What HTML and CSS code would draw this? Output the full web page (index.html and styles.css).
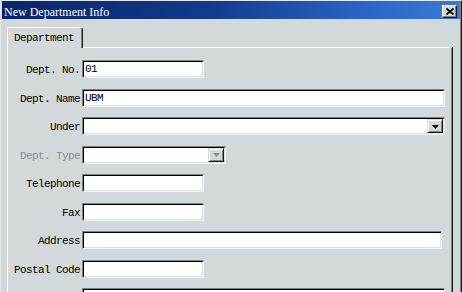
FILE: index.html
```html
<!DOCTYPE html>
<html>
<head>
<meta charset="utf-8">
<title>New Department Info</title>
<link rel="stylesheet" href="styles.css">
</head>
<body>
<div class="window">
  <div class="titlebar">
    <span class="title">New Department Info</span>
    <span class="close"><svg width="8" height="7" viewBox="0 0 8 7"><path d="M0.5 0.5L7.5 6.5M7.5 0.5L0.5 6.5" stroke="#000" stroke-width="1.7" fill="none"/></svg></span>
  </div>
  <div class="body">
    <div class="tabstrip">
      <div class="tab">Department</div>
      <div class="tabfill"></div>
    </div>
    <div class="panel">
      <div class="form">
        <label class="lbl">Dept. No.</label>
        <div class="field w-short">01</div>

        <label class="lbl">Dept. Name</label>
        <div class="field w-long">UBM</div>

        <label class="lbl">Under</label>
        <div class="field combo w-long"><span class="val"></span><span class="dd"><svg width="7" height="4" viewBox="0 0 7 4"><polygon points="0,0 7,0 3.5,4" fill="#000"/></svg></span></div>

        <label class="lbl disabled">Dept. Type</label>
        <div class="field combo w-type"><span class="val"></span><span class="dd"><svg width="7" height="4" viewBox="0 0 7 4"><polygon points="0,0 7,0 3.5,4" fill="#8c9293"/></svg></span></div>

        <label class="lbl">Telephone</label>
        <div class="field w-short"></div>

        <label class="lbl">Fax</label>
        <div class="field w-short"></div>

        <label class="lbl">Address</label>
        <div class="field w-addr"></div>

        <label class="lbl">Postal Code</label>
        <div class="field w-short"></div>

        <span class="lbl"></span>
        <div class="field w-long"></div>
      </div>
    </div>
  </div>
</div>
</body>
</html>
```
FILE: styles.css
```css
html, body {
  margin: 0;
  padding: 0;
  background: #d3d9da;
}

.window {
  width: 462px;
  height: 292px;
  box-sizing: border-box;
  overflow: hidden;
  background: #d3d9da;
  border-top: 1px solid #e4e8e9;
  border-left: 1px solid #e4e8e9;
  border-right: 1px solid #1a1a1a;
  box-shadow: inset -1px 0 #7d8283;
  display: flex;
  flex-direction: column;
}

.titlebar {
  height: 18px;
  margin: 0 1px;
  box-sizing: border-box;
  background: linear-gradient(to right, #0a246a 0%, #123a8c 45%, #2a66c8 80%, #3a7ad6 100%);
  display: flex;
  justify-content: space-between;
  align-items: flex-start;
}

.title {
  font-family: "Liberation Serif", serif;
  font-size: 12px;
  line-height: 14px;
  color: #fff;
  padding: 4px 0 0 2px;
  white-space: nowrap;
}

.close {
  width: 15px;
  height: 13px;
  box-sizing: border-box;
  margin: 4px 3px 0 0;
  background: #d3d9da;
  border: 1px solid;
  border-color: #fff #1a1a1a #1a1a1a #fff;
  box-shadow: inset -1px -1px #7d8283;
  display: flex;
  align-items: center;
  justify-content: center;
}

.body {
  flex: 1;
  padding: 8px 8px 0 6px;
  display: flex;
  flex-direction: column;
}

.tabstrip {
  display: flex;
  align-items: flex-end;
}

.tab {
  width: 76px;
  height: 21px;
  box-sizing: border-box;
  border-top: 1px solid #fff;
  border-left: 1px solid #fff;
  border-right: 1px solid #1a1a1a;
  border-radius: 2px 3px 0 0;
  box-shadow: inset -1px 0 #7d8283;
  padding: 4px 0 0 6px;
  font-family: "Liberation Mono", monospace;
  font-size: 11px;
  letter-spacing: -0.6px;
  line-height: 13px;
  color: #000;
  white-space: pre;
}

.tabfill {
  flex: 1;
  height: 1px;
  background: #fff;
  border-right: 1px solid #1a1a1a;
}

.panel {
  flex: 1;
  border-left: 1px solid #fff;
  border-right: 1px solid #1a1a1a;
  box-shadow: inset -1px 0 #7d8283;
  padding-top: 12px;
}

.form {
  display: grid;
  grid-template-columns: 74px 1fr;
  grid-auto-rows: 18px;
  row-gap: 10.5px;
  align-items: start;
}

.lbl {
  font-family: "Liberation Mono", monospace;
  font-size: 11px;
  letter-spacing: -0.6px;
  line-height: 20px;
  height: 20px;
  margin-bottom: -2px;
  text-align: right;
  padding-right: 2px;
  color: #000;
  white-space: pre;
}

.lbl.disabled {
  color: #8a9091;
}

.field {
  height: 18px;
  box-sizing: border-box;
  background: #fff;
  border: 1px solid;
  border-color: #7d8283 #f2f4f4 #f2f4f4 #7d8283;
  box-shadow: inset 1px 1px #000, inset -1px -1px #dde1e2;
  padding: 2px 2px 0 2px;
  font-family: "Liberation Mono", monospace;
  font-size: 11px;
  letter-spacing: -0.6px;
  line-height: 13px;
  color: #000;
  white-space: pre;
  overflow: hidden;
}

.w-short { width: 122px; }
.w-long { width: 363px; }
.w-type { width: 144px; }
.w-addr { width: 360px; }

.combo {
  display: flex;
  padding: 1px 1px 1px 2px;
}

.combo .val {
  flex: 1;
}

.dd {
  width: 16px;
  height: 14px;
  box-sizing: border-box;
  background: #d3d9da;
  border: 1px solid;
  border-color: #d3d9da #1a1a1a #1a1a1a #d3d9da;
  box-shadow: inset 1px 1px #fff, inset -1px -1px #7d8283;
  display: flex;
  align-items: center;
  justify-content: center;
  padding-top: 1px;
}
```
